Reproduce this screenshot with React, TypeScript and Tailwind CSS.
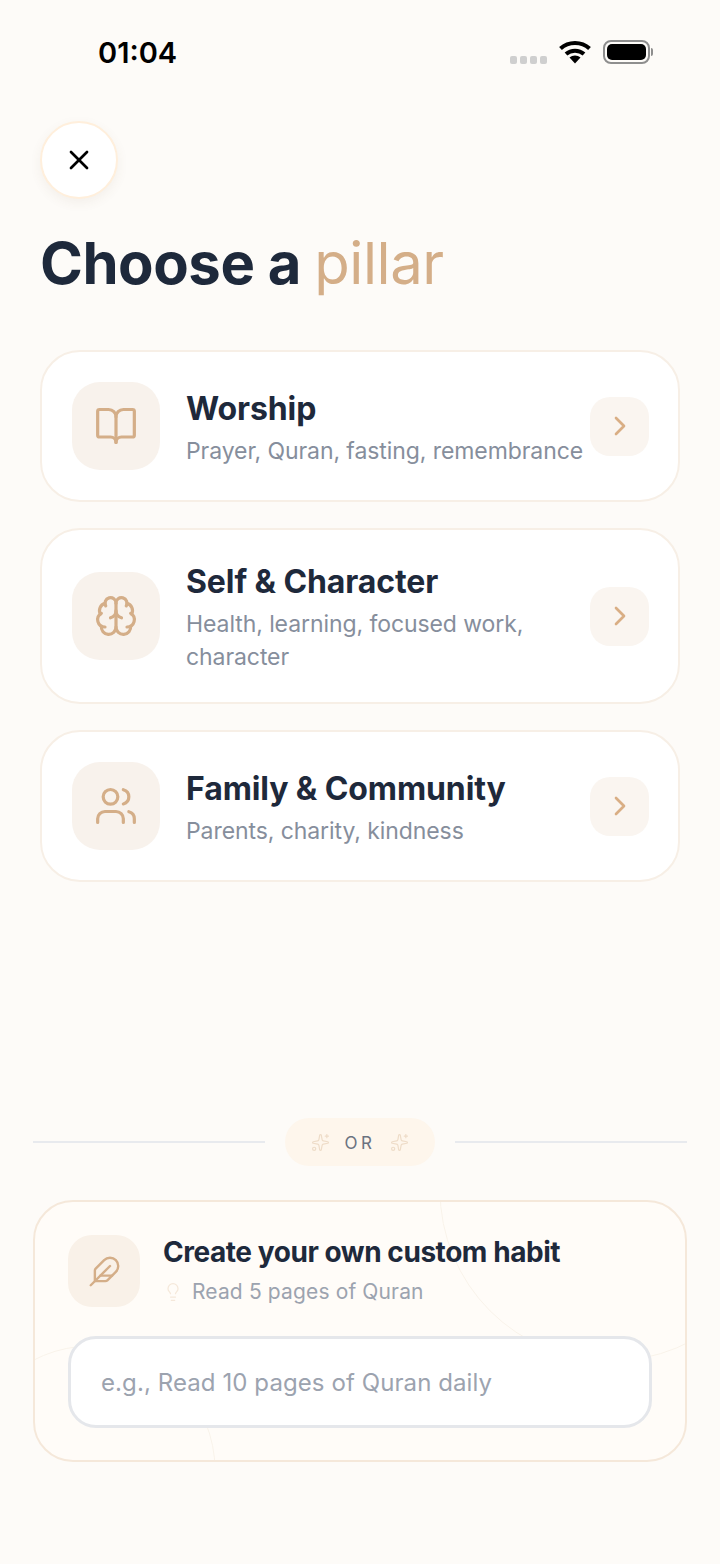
import { BookOpen, Brain, ChevronRight, Feather, Lightbulb, Sparkles, Users, X } from 'lucide-react';
import type { ReactNode } from 'react';

interface PillarCardProps {
  title: string;
  description: ReactNode;
  icon: ReactNode;
}

function PillarCard({ title, description, icon }: PillarCardProps) {
  return (
    <div className="flex items-center rounded-[40px] border-2 border-[#f7efe6] bg-white py-[30px] pl-[30px] pr-[30px]">
      <div className="flex h-[88px] w-[88px] shrink-0 items-center justify-center rounded-[28px] bg-[#f8f2ec] text-[#d4ae88]">
        {icon}
      </div>
      <div className="ml-[26px] w-[404px] shrink-0 translate-y-[2px]">
        <h2 className="text-[32px] leading-[40px] font-bold tracking-[-0.1px] text-[#1e293b]">{title}</h2>
        <p className="mt-[6px] text-[23px] leading-[33px] tracking-[-0.08px] text-[#868e9c]">{description}</p>
      </div>
      <div className="ml-auto flex h-[59px] w-[59px] shrink-0 items-center justify-center rounded-[20px] bg-[#faf5f0] text-[#d9ae84]">
        <ChevronRight size={32} strokeWidth={2} />
      </div>
    </div>
  );
}

function StatusBar() {
  return (
    <div className="flex h-[106px] items-start justify-between pl-[98px] pr-[67px] pt-[34px]">
      <span className="text-[29px] leading-[38px] font-semibold text-black">01:04</span>
      <div className="flex items-start pt-[6px]">
        <div className="mt-[16px] flex gap-[3px]">
          <span className="h-[8px] w-[7px] rounded-[2px] bg-[#cfcfcf]" />
          <span className="h-[8px] w-[7px] rounded-[2px] bg-[#cfcfcf]" />
          <span className="h-[8px] w-[7px] rounded-[2px] bg-[#cfcfcf]" />
          <span className="h-[8px] w-[7px] rounded-[2px] bg-[#cfcfcf]" />
        </div>
        <svg className="ml-[12px]" width="32" height="24" viewBox="0 0 32 24" fill="none">
          <path d="M1.5 8.5C9.5 1 22.5 1 30.5 8.5" stroke="#000" strokeWidth="4" />
          <path d="M7 14C12 9.5 20 9.5 25 14" stroke="#000" strokeWidth="4" />
          <path d="M10.5 17.5C13.5 14.8 18.5 14.8 21.5 17.5L16 23.5Z" fill="#000" />
        </svg>
        <div className="ml-[12px] flex items-center">
          <div className="flex h-[24px] w-[47px] items-center justify-center rounded-[8px] border-2 border-[#8e8e8e]">
            <div className="h-[16px] w-[39px] rounded-[5px] bg-black" />
          </div>
          <div className="ml-[1px] h-[8px] w-[2px] rounded-r-[2px] bg-[#8e8e8e]" />
        </div>
      </div>
    </div>
  );
}

export default function App() {
  return (
    <div className="flex h-[1564px] w-[720px] flex-col overflow-hidden bg-[#fdfbf8] font-['Inter','Noto_Sans',sans-serif]">
      <StatusBar />

      <div className="px-10">
        <button className="mt-[15px] flex h-[78px] w-[78px] items-center justify-center rounded-full border-2 border-[#ffefdc] bg-white text-black shadow-[0_4px_12px_rgba(120,90,50,0.07)]">
          <X size={32} strokeWidth={2} />
        </button>
        <h1 className="mt-[28px] text-[58px] leading-[72px] font-bold tracking-[-0.45px] text-[#1e293b]">
          Choose a <span className="font-normal text-[#d4ae88]">pillar</span>
        </h1>

        <div className="mt-[51px] flex flex-col gap-[26px]">
          <PillarCard
            title="Worship"
            description="Prayer, Quran, fasting, remembrance"
            icon={<BookOpen size={44} strokeWidth={1.75} />}
          />
          <PillarCard
            title="Self & Character"
            description="Health, learning, focused work, character"
            icon={<Brain size={44} strokeWidth={1.75} />}
          />
          <PillarCard
            title="Family & Community"
            description="Parents, charity, kindness"
            icon={<Users size={44} strokeWidth={1.75} />}
          />
        </div>
      </div>

      <div className="mt-auto px-[33px] pb-[102px]">
        <div className="flex items-center">
          <div className="h-[2px] flex-1 bg-[#e8eaee]" />
          <div className="mx-[20px] flex h-[48px] w-[150px] items-center justify-center rounded-full bg-[#fef6ec]">
            <Sparkles size={19} strokeWidth={1.5} className="text-[#eedcc8]" />
            <span className="mx-[15px] pt-[3px] text-[17px] tracking-[3.5px] text-[#6b7280]">OR</span>
            <Sparkles size={19} strokeWidth={1.5} className="text-[#eedcc8]" />
          </div>
          <div className="h-[2px] flex-1 bg-[#e8eaee]" />
        </div>

        <div className="relative mt-[34px] h-[262px] overflow-hidden rounded-[40px] border-2 border-[#f5e8da] bg-[#fffcf8] px-[33px] pt-[33px]">
          <svg className="absolute -left-[2px] -top-[2px]" width="654" height="262" viewBox="33 1200 654 262" fill="none">
            <circle cx="611" cy="1190" r="171" stroke="#f9f3ea" strokeWidth="1" />
            <circle cx="91" cy="1470" r="124" stroke="#f9f3ea" strokeWidth="1" />
          </svg>
          <div className="relative flex">
            <div className="flex h-[72px] w-[72px] shrink-0 items-center justify-center rounded-[24px] bg-[#f9f1e8] text-[#d4ae88]">
              <Feather size={33} strokeWidth={1.75} />
            </div>
            <div className="ml-[23px]">
              <h3 className="text-[28px] leading-[34px] font-bold tracking-[-0.45px] text-[#1e293b]">
                Create your own custom habit
              </h3>
              <div className="mt-[7px] flex items-center">
                <Lightbulb size={20} strokeWidth={1.5} className="text-[#f5e8da]" />
                <span className="ml-[9px] text-[21px] leading-[32px] tracking-[0.14px] text-[#9ca3af]">Read 5 pages of Quran</span>
              </div>
            </div>
          </div>
          <div className="relative mt-[28px] flex h-[92px] w-[584px] items-center rounded-[28px] border-[3px] border-[#e5e7eb] bg-white px-[30px]">
            <span className="pt-[1px] text-[24px] tracking-[0.09px] text-[#9ca3af]">e.g., Read 10 pages of Quran daily</span>
          </div>
        </div>
      </div>
    </div>
  );
}
